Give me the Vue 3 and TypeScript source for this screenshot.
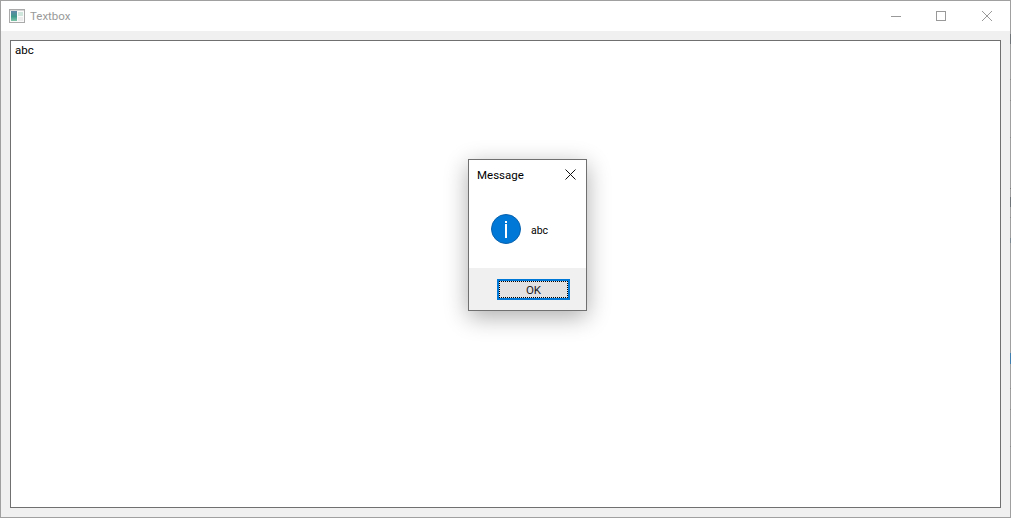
<script setup lang="ts">
interface EdgeMark { top: number; height: number; color: string }

const title: string = 'Textbox'
const marks: EdgeMark[] = [
  { top: 34, height: 10, color: '#6f7478' },
  { top: 79, height: 1, color: '#8a8a8a' },
  { top: 100, height: 1, color: '#8a8a8a' },
  { top: 137, height: 1, color: '#8a8a8a' },
  { top: 188, height: 1, color: '#777' },
  { top: 197, height: 10, color: '#6f7478' },
  { top: 217, height: 1, color: '#8a8a8a' },
  { top: 238, height: 5, color: '#7b8790' },
  { top: 353, height: 11, color: '#3f7fb0' },
  { top: 388, height: 1, color: '#8a8a8a' },
  { top: 409, height: 1, color: '#8a8a8a' },
  { top: 446, height: 1, color: '#8a8a8a' },
]
const markStyle = (m: EdgeMark) => ({ top: `${m.top}px`, height: `${m.height}px`, background: m.color })
</script>

<template>
  <div class="screen">
    <div class="window">
      <header class="titlebar">
        <svg class="appicon" width="16" height="16" viewBox="0 0 16 16">
          <defs>
            <linearGradient id="pane" x1="0" y1="0" x2="0" y2="1">
              <stop offset="0" stop-color="#5f86a8" />
              <stop offset="0.55" stop-color="#3f9a8c" />
              <stop offset="1" stop-color="#7fc4a8" />
            </linearGradient>
          </defs>
          <rect x="0.5" y="1.5" width="15" height="13" fill="#fafafa" stroke="#aaa" />
          <rect x="1" y="2" width="14" height="1" fill="#d6d6d6" />
          <rect x="2" y="3" width="6" height="10" fill="url(#pane)" />
          <rect x="9" y="4" width="5" height="4" fill="#cfe6dc" />
          <rect x="9" y="9" width="5" height="4" fill="#ececec" />
        </svg>
        <span class="title">{{ title }}</span>
        <div class="controls">
          <svg class="ctl" width="46" height="30" viewBox="0 0 46 30">
            <path d="M19 15.5H29" stroke="#999" fill="none" />
          </svg>
          <svg class="ctl" width="46" height="30" viewBox="0 0 46 30">
            <rect x="18.5" y="10.5" width="9" height="9" stroke="#999" fill="none" />
          </svg>
          <svg class="ctl" width="46" height="30" viewBox="0 0 46 30">
            <path d="M18 10L28 20M28 10L18 20" stroke="#999" fill="none" />
          </svg>
        </div>
      </header>
      <main class="content">
        <div class="textbox">abc</div>
      </main>

      <section class="dialog">
        <div class="dlg-title">
          <span class="dlg-caption">Message</span>
          <svg width="11" height="11" viewBox="0 0 11 11">
            <path d="M0.5 0.5L10.5 10.5M10.5 0.5L0.5 10.5" stroke="#111" fill="none" />
          </svg>
        </div>
        <div class="dlg-body">
          <svg width="30" height="30" viewBox="0 0 30 30">
            <circle cx="15" cy="15" r="14.5" fill="#0078d7" stroke="#0a62ad" />
            <rect x="14" y="7" width="2" height="2" fill="#fff" />
            <rect x="14" y="10" width="2" height="14" fill="#fff" />
          </svg>
          <span class="msg">abc</span>
        </div>
        <div class="dlg-foot">
          <button class="ok" type="button"><span class="ok-inner">OK</span></button>
        </div>
      </section>
    </div>
    <i v-for="m in marks" :key="m.top" class="edge-mark" :style="markStyle(m)"></i>
  </div>
</template>

<style>
html, body { margin: 0; background: #fff; }
</style>

<style scoped>
.screen {
  position: relative;
  width: 1011px;
  height: 518px;
  overflow: hidden;
}
.edge-mark {
  position: absolute;
  left: 1010px;
  width: 1px;
}
.window {
  position: relative;
  box-sizing: border-box;
  width: 1011px;
  height: 518px;
  border: 1px solid #a0a0a0;
  display: flex;
  flex-direction: column;
  font-family: Roboto, "Noto Sans", sans-serif;
  font-size: 11.5px;
  color: #000;
  background: #f0f0f0;
  overflow: hidden;
}
.titlebar {
  height: 30px;
  flex: none;
  display: flex;
  align-items: center;
  background: #fff;
  padding-left: 8px;
}
.appicon { flex: none; }
.title { margin-left: 5px; color: #999; }
.controls { margin-left: auto; display: flex; }
.ctl { display: block; }
.content {
  flex: 1;
  display: flex;
  padding: 9px;
  min-height: 0;
}
.textbox {
  flex: 1;
  border: 1px solid #707070;
  background: #fff;
  padding: 1px 4px;
  line-height: 16px;
}
.dialog {
  position: absolute;
  left: 467px;
  top: 158px;
  width: 119px;
  height: 152px;
  box-sizing: border-box;
  border: 1px solid #707070;
  background: #fff;
  box-shadow: 0 6px 22px rgba(0, 0, 0, 0.32);
  display: flex;
  flex-direction: column;
}
.dlg-title {
  height: 28px;
  display: flex;
  align-items: center;
  justify-content: space-between;
  padding: 0 10px 0 8px;
}
.dlg-caption { padding-top: 1px; }
.dlg-body {
  flex: 1;
  display: flex;
  align-items: center;
  padding: 2px 0 0 22px;
}
.msg { margin-left: 10px; margin-top: 2px; font-size: 10.5px; }
.dlg-foot {
  height: 42px;
  background: #f0f0f0;
  display: flex;
  justify-content: flex-end;
  align-items: center;
  padding-right: 16px;
}
.ok {
  width: 73px;
  height: 21px;
  box-sizing: border-box;
  padding: 0;
  border: 2px solid #0078d7;
  background: #e1e1e1;
  font: inherit;
  color: #222;
}
.ok-inner {
  display: flex;
  align-items: center;
  justify-content: center;
  height: 100%;
  box-sizing: border-box;
  padding-top: 2px;
  border: 1px dotted #000;
}
</style>
